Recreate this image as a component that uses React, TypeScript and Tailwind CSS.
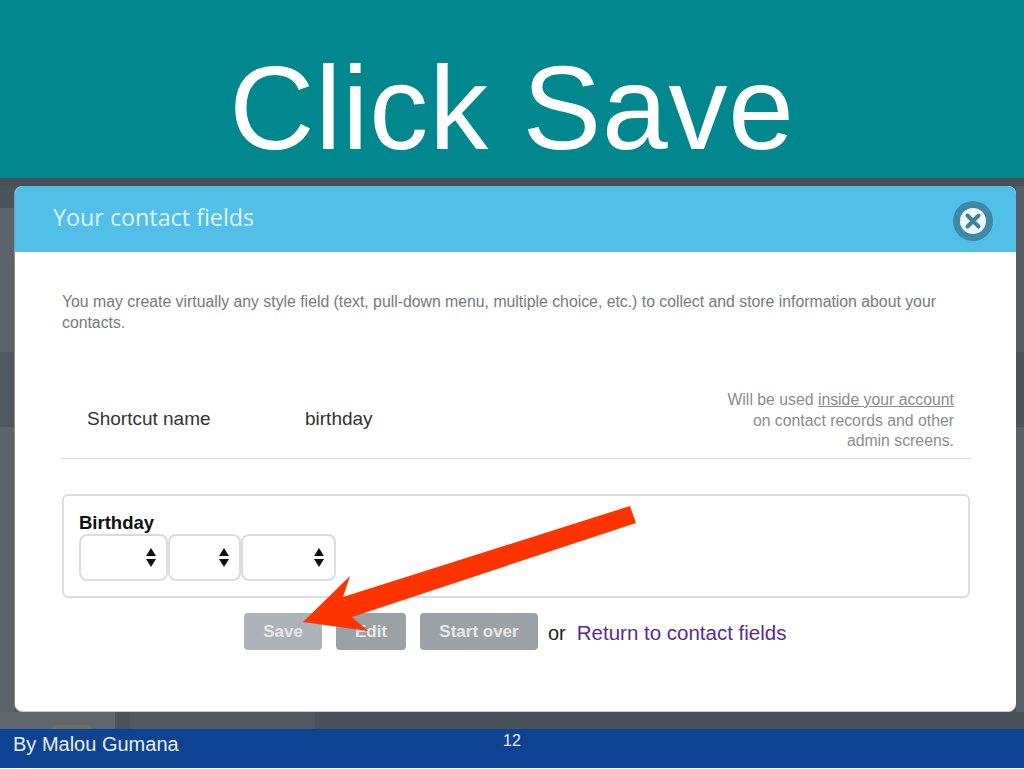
const sans = "font-['Liberation_Sans',Arial,sans-serif]";
const ui = "font-['Open_Sans','Liberation_Sans',sans-serif]";

function Stepper() {
  return (
    <svg width="10" height="19" viewBox="0 0 10 19" className="block">
      <path d="M5 0 L10 8 L0 8 Z M0 11 L10 11 L5 19 Z" fill="#111" />
    </svg>
  );
}

function Select({ w, pr }: { w: string; pr: string }) {
  return (
    <div className={`${w} ${pr} h-[47px] rounded-[8px] border-2 border-[#dadcde] bg-white flex items-center justify-end`}>
      <Stepper />
    </div>
  );
}

function Btn({ label, w, bg }: { label: string; w: string; bg: string }) {
  return (
    <div className={`${w} ${bg} h-[37px] pt-px rounded-[4px] flex items-center justify-center text-[#e6e8ea] text-[17px] font-bold ${sans}`}>
      {label}
    </div>
  );
}

export default function App() {
  return (
    <div className={`relative w-[1024px] h-[769px] overflow-hidden flex flex-col bg-[#4c545c] ${sans}`}>
      <div className="h-[178px] shrink-0 bg-[#01888f] flex justify-center">
        <div className="text-white text-[118px] leading-none mt-[49px] tracking-[0.8px]">Click Save</div>
      </div>

      <div className="h-[8px] shrink-0 bg-[#4a5058]" />

      <div className="flex-1 flex min-h-0">
        <div className="w-[15px] shrink-0 flex flex-col bg-[#5c636b]">
          <div className="h-[22px] bg-[#4c535b]" />
          <div className="h-[144px]" />
          <div className="h-[75px] bg-[#4f5760]" />
        </div>

        <div className="flex-1 flex flex-col rounded-[8px] bg-white overflow-hidden border-b border-[#c9cdd0] shadow-[-1px_0_0_#8b9399]">
          <div className="h-[66px] shrink-0 bg-[#52bfe8] flex items-center justify-between pl-[38px] pr-[23px]">
            <div className={`text-[23.300px] text-[#dff3fa] ${ui} mb-[4px]`}>Your contact fields</div>
            <svg width="40" height="40" viewBox="0 0 40 40" className="block mt-[4px]">
              <circle cx="20" cy="20" r="20" fill="#3e88a8" />
              <circle cx="20" cy="20" r="13" fill="#f2f8fa" />
              <path d="M14.500 14.500 L25.500 25.500 M25.500 14.500 L14.500 25.500" stroke="#3e7f9c" strokeWidth="4" strokeLinecap="round" />
            </svg>
          </div>

          <div className="flex-1 flex flex-col pl-[47px] pr-[46px]">
            <p className="mt-[39px] w-[880px] text-[15.800px] leading-[21px] text-[#77797b]">
              You may create virtually any style field (text, pull-down menu, multiple choice, etc.) to collect and store information about your contacts.
            </p>

            <div className="mt-[57px] h-[69px] flex border-b border-[#d4d6d8] pr-[16px]">
              <div className="flex-1 flex items-start pt-[18px] text-[19px] leading-[21px] text-[#333]">
                <span className="w-[243px] pl-[25px]">Shortcut name</span>
                <span>birthday</span>
              </div>
              <div className="text-right text-[15.800px] leading-[20.500px] text-[#8a8c8e]">
                Will be used <span className="underline">inside your account</span>
                <br />
                on contact records and other
                <br />
                admin screens.
              </div>
            </div>

            <div className="mt-[35px] h-[104px] rounded-[6px] border-2 border-[#dadcde] pl-[15px] pt-[17px]">
              <div className="text-[18.500px] leading-[20px] font-bold text-[#111]">Birthday</div>
              <div className="flex mt-[1px]">
                <Select w="w-[89px]" pr="pr-[10px]" />
                <Select w="w-[73px]" pr="pr-[10px]" />
                <Select w="w-[95px]" pr="pr-[10px]" />
              </div>
            </div>

            <div className="mt-[15px] flex items-center pl-[182px]">
              <Btn label="Save" w="w-[78px]" bg="bg-[#adb1b8]" />
              <Btn label="Edit" w="w-[70px] ml-[14px]" bg="bg-[#9ca1a5]" />
              <Btn label="Start over" w="w-[118px] ml-[14px]" bg="bg-[#9ca1a5]" />
              <span className="ml-[10px] pt-[3px] text-[20px] text-[#222]">or</span>
              <span className="ml-[11px] pt-[3px] text-[20.500px] text-[#5b2a91]">Return to contact fields</span>
            </div>
          </div>
        </div>

        <div className="w-[8px] shrink-0 flex flex-col bg-[#596168]">
          <div className="h-[166px] bg-[#555c64]" />
          <div className="h-[75px] bg-[#4b535b]" />
        </div>
      </div>

      <div className="h-[17px] shrink-0 flex bg-[#49515a]">
        <div className="w-[115px] flex items-end pl-[52px] bg-[#5f666d]">
          <div className="w-[39px] h-[4px] rounded-t-full bg-[#6f7058]" />
        </div>
        <div className="w-[15px] bg-[#4b535a]" />
        <div className="w-[185px] bg-[#515960]" />
      </div>

      <div className="relative h-[40px] shrink-0 bg-[#0d4392] border-b border-white flex items-start pl-[13px] pt-[4px] text-[20px] leading-[22px] text-[#e8eefa]">
        <span>By Malou Gumana</span>
        <span className="absolute left-[503px] top-0 text-[16px] leading-[24px]">12</span>
      </div>

      <svg width="1024" height="769" viewBox="0 0 1024 769" className="absolute left-0 top-0 pointer-events-none">
        <path d="M630 506 L636 523 L352 617 L368 631 L303 622 L350 576 L343 597 Z" fill="#ff3300" />
      </svg>
    </div>
  );
}
